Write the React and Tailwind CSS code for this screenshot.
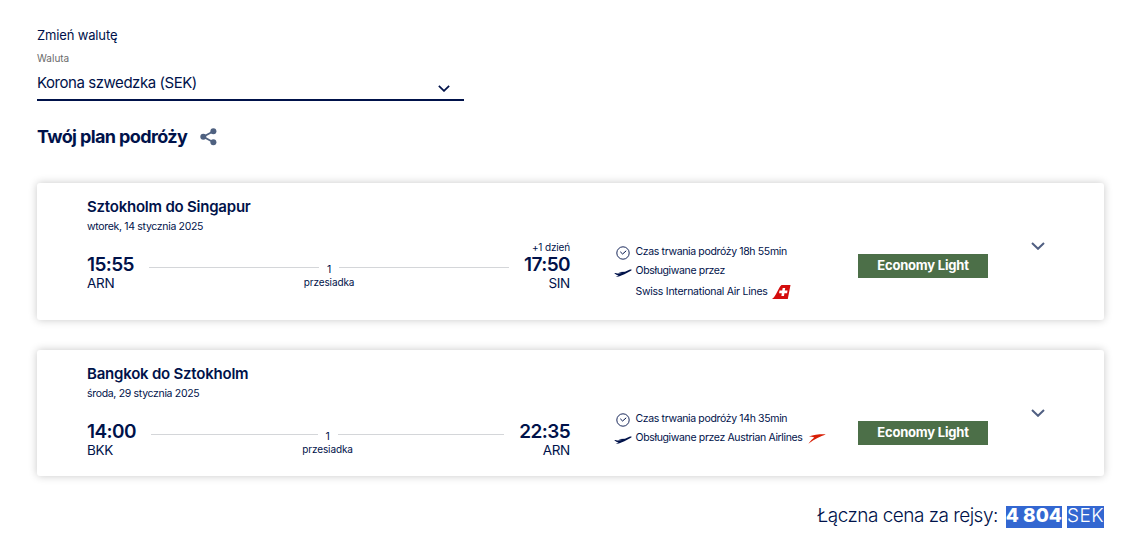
import { clsx } from 'clsx';

const flights = [
  {
    id: 'outbound',
    title: 'Sztokholm do Singapur',
    date: 'wtorek, 14 stycznia 2025',
    departure: { time: '15:55', code: 'ARN' },
    arrival: { time: '17:50', code: 'SIN', note: '+1 dzień' },
    duration: 'Czas trwania podróży 18h 55min',
    operator: 'Swiss International Air Lines',
    logo: 'swiss',
    height: 'h-[137px]',
  },
  {
    id: 'return',
    title: 'Bangkok do Sztokholm',
    date: 'środa, 29 stycznia 2025',
    departure: { time: '14:00', code: 'BKK' },
    arrival: { time: '22:35', code: 'ARN' },
    duration: 'Czas trwania podróży 14h 35min',
    operator: 'Austrian Airlines',
    logo: 'austrian',
    height: 'h-[126px]',
  },
];

const ChevronIcon = ({ className }) => (
  <svg className={className} viewBox="0 0 14 8" fill="none" stroke="currentColor" strokeWidth="2">
    <path d="M1 1 L7 6.8 L13 1" />
  </svg>
);

const ShareIcon = () => (
  <svg className="ml-[13px] h-[18px] w-[17px] text-[#4f6180]" viewBox="0 0 17 18" fill="currentColor">
    <circle cx="13.4" cy="3.3" r="3" />
    <circle cx="3.3" cy="8.8" r="3" />
    <circle cx="13.4" cy="14.3" r="3" />
    <path d="M13.4 3.3 L3.3 8.8 L13.4 14.3" fill="none" stroke="currentColor" strokeWidth="1.8" />
  </svg>
);

const ClockIcon = () => (
  <svg className="mt-1 ml-[1.5px] h-[14px] w-[14px]" viewBox="0 0 14 14" fill="none" stroke="currentColor">
    <circle cx="7" cy="7" r="6.2" strokeWidth="0.9" />
    <path d="M4.3 5.8 L6.6 8 L10.2 4.8" strokeWidth="1" />
  </svg>
);

const PlaneIcon = () => (
  <svg className="mt-2 h-2 w-[18px]" viewBox="0 0 18 8" fill="currentColor">
    <path d="M0.2 4.2 L1.3 4 L3.4 4.6 L8 4.1 L4.6 3.3 L6 2.9 L11 2.7 L16 0.6 C17.2 0.2 17.9 0.4 17.7 0.9 C17.4 1.6 15.8 2.4 14.6 3 L10.4 5.2 L4.8 7.4 L1.8 7.8 L4.6 6.2 L2.8 6 Z" />
  </svg>
);

const AirlineLogo = ({ name }) => {
  if (name === 'swiss') {
    return (
      <svg className="ml-1 h-[14px] w-[19px]" viewBox="0 0 19 14">
        <path d="M0 14 C4.5 11 6 3 9.5 0 H18.5 L15.8 14 Z" fill="#d40d0d" />
        <path d="M10.7 2.9 H13.2 L12.8 5.6 H15.5 L15.1 8.2 H12.4 L12 10.9 H9.4 L9.8 8.2 H7.1 L7.5 5.6 H10.2 Z" fill="#fff" />
      </svg>
    );
  }
  return (
    <svg className="mt-[2px] ml-[5px] h-[10px] w-[18px]" viewBox="0 0 18 10">
      <path d="M0.8 2.6 C6 0.7 12 0.2 17.7 0.4 C12.6 1.8 6.5 5 0.4 9.7 C2.6 6.8 4.4 4.9 6.3 3.4 C4.4 2.7 2.6 2.5 0.8 2.6 Z" fill="#d81e05" />
    </svg>
  );
};

const Stop = ({ time, code, note, alignEnd }) => (
  <div className={clsx('flex flex-col', alignEnd && 'items-end')}>
    <span className="h-[14px] text-[10px] leading-[14px] tracking-[-0.15px]">{note}</span>
    <span className="mt-px text-[19px] leading-5 font-semibold tracking-[-0.6px]">{time}</span>
    <span className="-mt-px text-[13.5px] leading-[18px] tracking-[-0.3px]">{code}</span>
  </div>
);

const FlightCard = ({ flight }) => (
  <section className={clsx('rounded-[3px] bg-white pt-[14px] pl-[50px] shadow-[0_0_8px_rgba(0,0,0,0.22)]', flight.height)}>
    <h2 className="text-[15px] leading-5 font-semibold tracking-[-0.22px]">{flight.title}</h2>
    <p className="mt-[2px] text-[10.5px] leading-[15px] tracking-[-0.32px]">{flight.date}</p>
    <div className="flex items-start">
      <div className="mt-1.5 flex w-[483px] shrink-0 justify-between">
        <Stop {...flight.departure} />
        <div className="mx-[15px] mt-[22px] flex flex-1 flex-col items-center">
          <div className="flex h-[11px] w-full items-start">
            <span className="mt-[5px] h-px flex-1 bg-[#d4d6d9]" />
            <span className="mt-[2px] w-5 text-center text-[10.5px] leading-[11px]">1</span>
            <span className="mt-[5px] h-px flex-1 bg-[#d4d6d9]" />
          </div>
          <span className="mt-[2px] text-[10px] leading-[14px] tracking-[-0.1px]">przesiadka</span>
        </div>
        <Stop {...flight.arrival} alignEnd />
      </div>
      <div className="mt-2 ml-[44px] w-[244px] shrink-0 text-[10.5px] leading-5 tracking-[-0.35px]">
        <div className="flex">
          <div className="w-[21.5px]"><ClockIcon /></div>
          <span>{flight.duration}</span>
        </div>
        <div className="-mt-px flex">
          <div className="w-[21.5px]"><PlaneIcon /></div>
          {flight.logo === 'austrian' ? (
            <span className="flex items-center whitespace-nowrap">
              Obsługiwane przez {flight.operator}
              <AirlineLogo name={flight.logo} />
            </span>
          ) : (
            <span>Obsługiwane przez</span>
          )}
        </div>
        {flight.logo === 'swiss' && (
          <div className="mt-px ml-[21.5px] flex items-center">
            <span className="tracking-[-0.26px]">{flight.operator}</span>
            <AirlineLogo name={flight.logo} />
          </div>
        )}
      </div>
      <div className="mt-5 h-6 w-[130px] shrink-0 bg-[#4c6f48] text-center text-[13px] leading-[23px] font-bold tracking-[-0.2px] text-white">
        Economy Light
      </div>
      <ChevronIcon className="mt-2 ml-[43px] h-2 w-[14px] text-[#505f82]" />
    </div>
  </section>
);

export default function App() {
  return (
    <main className="h-[548px] overflow-hidden bg-white pt-[25px] pr-[21px] pl-[37px] font-['Inter','Liberation_Sans',sans-serif] text-[#00124a]">
      <p className="text-[13px] leading-5 tracking-[-0.15px]">Zmień walutę</p>
      <p className="mt-[5px] pt-px text-[10px] leading-[15px] text-[#6b6b6b]">Waluta</p>
      <div className="flex h-[35px] w-[427px] justify-between border-b-2 border-[#00124a] pt-[7px]">
        <span className="text-[15px] leading-5 tracking-[-0.45px]">Korona szwedzka (SEK)</span>
        <ChevronIcon className="mt-3 mr-[14px] h-[7px] w-3" />
      </div>
      <div className="mt-6 flex h-6 items-center">
        <h1 className="text-[18px] leading-6 font-bold tracking-[-0.62px]">Twój plan podróży</h1>
        <ShareIcon />
      </div>
      <div className="mt-[34px] flex flex-col gap-[30px]">
        {flights.map((flight) => (
          <FlightCard key={flight.id} flight={flight} />
        ))}
      </div>
      <div className="mt-[30px] flex h-[22px] justify-end text-[19px] leading-5 whitespace-nowrap">
        <span className="font-light tracking-[-0.52px]">Łączna cena za rejsy:</span>
        <span className="ml-2 bg-[#3367d1] font-extrabold text-white">4 804</span>
        <span className="ml-[5px] bg-[#3367d1] font-light tracking-[0.5px] text-white">SEK</span>
      </div>
    </main>
  );
}
